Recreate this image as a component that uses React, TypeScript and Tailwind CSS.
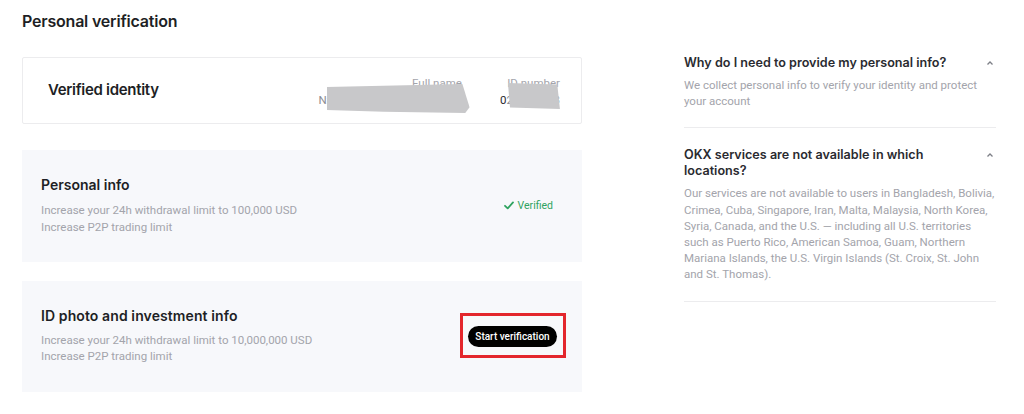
import React from "react";

const faqs = [
  {
    q: "Why do I need to provide my personal info?",
    a: "We collect personal info to verify your identity and protect your account",
  },
  {
    q: "OKX services are not available in which locations?",
    a: "Our services are not available to users in Bangladesh, Bolivia, Crimea, Cuba, Singapore, Iran, Malta, Malaysia, North Korea, Syria, Canada, and the U.S. — including all U.S. territories such as Puerto Rico, American Samoa, Guam, Northern Mariana Islands, the U.S. Virgin Islands (St. Croix, St. John and St. Thomas).",
  },
];

function ChevronUp() {
  return (
    <svg width="8" height="6" viewBox="0 0 8 6" className="mt-[5px] shrink-0">
      <polyline points="1.5,4.5 4,2 6.5,4.5" fill="none" stroke="#7d7f87" strokeWidth="1.3" />
    </svg>
  );
}

function Check() {
  return (
    <svg width="10" height="9" viewBox="0 0 10 9">
      <path d="M1 4.8 L3.7 7.4 L9 1.4" fill="none" stroke="#2fa360" strokeWidth="1.8" strokeLinecap="round" strokeLinejoin="round" />
    </svg>
  );
}

function Blur({ className }: { className: string }) {
  return <div className={"absolute bg-[#c8c8ca] " + className} />;
}

export default function App() {
  return (
    <div className="w-[1024px] h-[414px] bg-white overflow-hidden flex font-['Inter',sans-serif] text-[#1e1f25]">
      <div className="w-[560px] ml-[22px] shrink-0">
        <h1 className="mt-[10px] text-[16px] leading-[22px] font-semibold tracking-[-0.2px]">Personal verification</h1>

        <div className="mt-[25px] h-[67px] border border-[#ececee] rounded-[2px] flex items-center pl-[25px] pr-[21px]">
          <div className="text-[15px] font-semibold flex-1 tracking-[-0.3px]">Verified identity</div>
          <div className="relative flex gap-[38px] text-[11.5px] leading-[17px] text-[#a3a4ab] font-['Roboto',sans-serif] mt-[3px]">
            <div className="relative text-right">
              <div>Full name</div>
              <div className="text-[#8b8c93]">Nxxxxxxxxxxx Yxxxxxxxxxxx</div>
              <Blur className="left-[8px] top-[9px] w-[143px] h-[29px] [clip-path:polygon(0_10%,95%_0,100%_80%,97%_100%,40%_96%,0_90%)]" />
            </div>
            <div className="relative text-right">
              <div>ID number</div>
              <div className="text-[#8b8c93]"><span className="text-[#2a2b30]">0</span>2xxxxxx63</div>
              <Blur className="left-[8px] top-[8px] w-[52px] h-[26px] [clip-path:polygon(0_0,95%_6%,100%_100%,4%_94%)]" />
            </div>
          </div>
        </div>

        <div className="mt-[26px] h-[112px] bg-[#f7f8fb] flex items-center pl-[19px] pr-[29px]">
          <div className="flex-1 mb-[2px]">
            <div className="text-[14px] leading-[20px] font-semibold">Personal info</div>
            <div className="mt-[7px] text-[11.5px] leading-[17px] text-[#a3a4ab] font-['Roboto',sans-serif]">
              <div>Increase your 24h withdrawal limit to 100,000 USD</div>
              <div>Increase P2P trading limit</div>
            </div>
          </div>
          <div className="flex items-center gap-[4px] text-[10.5px] text-[#2fa360] mb-[1px] font-['Roboto',sans-serif]">
            <Check />
            <span>Verified</span>
          </div>
        </div>

        <div className="mt-[19px] h-[111px] bg-[#f7f8fb] flex items-center pl-[19px] pr-[16px]">
          <div className="flex-1 mb-[3px]">
            <div className="text-[14px] leading-[20px] font-semibold tracking-[0.1px]">ID photo and investment info</div>
            <div className="mt-[6px] text-[11.5px] leading-[16px] text-[#a3a4ab] font-['Roboto',sans-serif]">
              <div>Increase your 24h withdrawal limit to 10,000,000 USD</div>
              <div>Increase P2P trading limit</div>
            </div>
          </div>
          <div className="border-[3px] border-[#e3262c] pt-[10px] pb-[8px] pl-[5px] pr-[6px] mb-[2px]">
            <button className="h-[21px] w-[89px] flex items-center justify-center rounded-full bg-black text-white text-[10px] font-medium whitespace-nowrap font-['Roboto',sans-serif]">
              Start verification
            </button>
          </div>
        </div>
      </div>

      <div className="ml-[102px] w-[312px] shrink-0 pt-[55px]">
        {faqs.map((f) => (
          <div key={f.q} className="border-b border-[#ececee] pb-[18px] mb-[19px]">
            <div className="flex justify-between gap-[12px]">
              <div className="text-[12.6px] leading-[16px] font-semibold text-[#2a2b30]">{f.q}</div>
              <div className="pr-[2px]"><ChevronUp /></div>
            </div>
            <div className="mt-[6px] text-[11.5px] leading-[16.2px] text-[#a3a4ab] font-['Roboto',sans-serif]">{f.a}</div>
          </div>
        ))}
      </div>
    </div>
  );
}
